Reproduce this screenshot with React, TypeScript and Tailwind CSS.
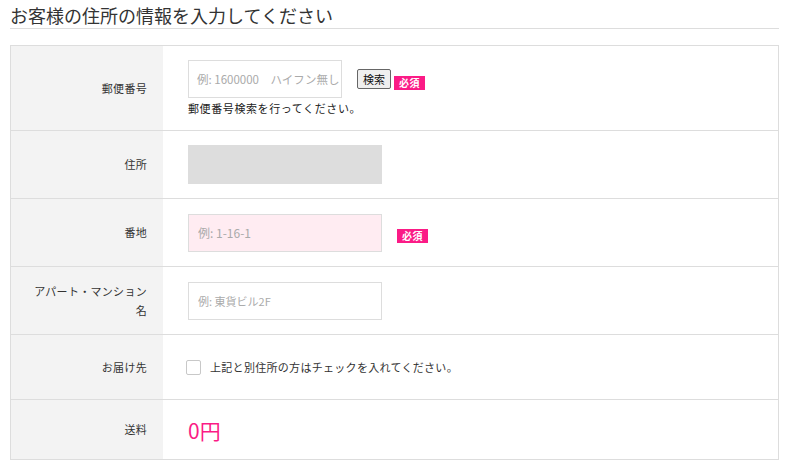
import React from "react";

const font = { fontFamily: '"Noto Sans CJK JP", "Noto Sans", sans-serif' };

function Badge() {
  return (
    <span className="inline-block bg-[#fb1b86] px-[5px] text-[10px] font-bold leading-[14px] tracking-[0.5px] text-white">
      必須
    </span>
  );
}

function Row({ label, h, children }: { label: React.ReactNode; h: string; children: React.ReactNode }) {
  return (
    <div className={`flex border-b border-[#dddddd] last:border-b-0 ${h}`}>
      <div className="flex w-[152px] shrink-0 items-center justify-end bg-[#f3f3f3] pr-[16px] text-right text-[11px] leading-[19px] tracking-[0.3px] text-[#333]">
        {label}
      </div>
      <div className="flex flex-1 items-center pl-[25px]">{children}</div>
    </div>
  );
}

export default function App() {
  return (
    <div className="h-[474px] w-[788px] bg-white pl-[10px] pr-[9px] pt-[5px] text-[#333]" style={font}>
      <h2 className="border-b border-[#dddddd] pb-[3px] text-[18px] leading-[20px] text-[#333]">
        お客様の住所の情報を入力してください
      </h2>
      <div className="mt-[16px] border border-[#dddddd]">
        <Row label="郵便番号" h="h-[85px]">
          <div className="flex flex-col self-start pt-[14px]">
            <div className="flex items-center">
              <input
                className="h-[38px] w-[154px] border border-[#dddddd] pl-[8px] pr-0 text-[11.5px] outline-none placeholder:text-[#aaa]"
                placeholder="例: 1600000　ハイフン無し"
              />
              <button className="ml-[15px] h-[20px] rounded-[2px] border border-[#666] bg-[#efefef] px-[5px] text-[11px] leading-[16px] text-[#111]">
                検索
              </button>
              <span className="ml-[3px] mt-[2px]">
                <Badge />
              </span>
            </div>
            <p className="mt-[2px] text-[11px] leading-[17px] tracking-[0.6px] text-[#222]">
              郵便番号検索を行ってください。
            </p>
          </div>
        </Row>
        <Row label="住所" h="h-[68px]">
          <div className="h-[39px] w-[194px] bg-[#dddddd]" />
        </Row>
        <Row label="番地" h="h-[68px]">
          <input
            className="h-[38px] w-[194px] border border-[#dddddd] bg-[#ffecf2] px-[9px] text-[12px] outline-none placeholder:text-[#aaa]"
            placeholder="例: 1-16-1"
          />
          <span className="ml-[15px]">
            <Badge />
          </span>
        </Row>
        <Row
          label={
            <span>
              アパート・マンション
              <br />名
            </span>
          }
          h="h-[68px]"
        >
          <input
            className="h-[38px] w-[194px] border border-[#dddddd] bg-white px-[9px] text-[11px] outline-none placeholder:text-[#aaa]"
            placeholder="例: 東貨ビル2F"
          />
        </Row>
        <Row label="お届け先" h="h-[65px]">
          <label className="-ml-[2px] flex items-center text-[11px] tracking-[0.3px] text-[#333]">
            <span className="inline-block h-[15px] w-[15px] rounded-[2px] border border-[#c8c8c8] bg-white" />
            <span className="ml-[9px]">上記と別住所の方はチェックを入れてください。</span>
          </label>
        </Row>
        <Row label="送料" h="h-[59px]">
          <span className="text-[21px] leading-[24px] text-[#fb1b86]">0円</span>
        </Row>
      </div>
    </div>
  );
}
